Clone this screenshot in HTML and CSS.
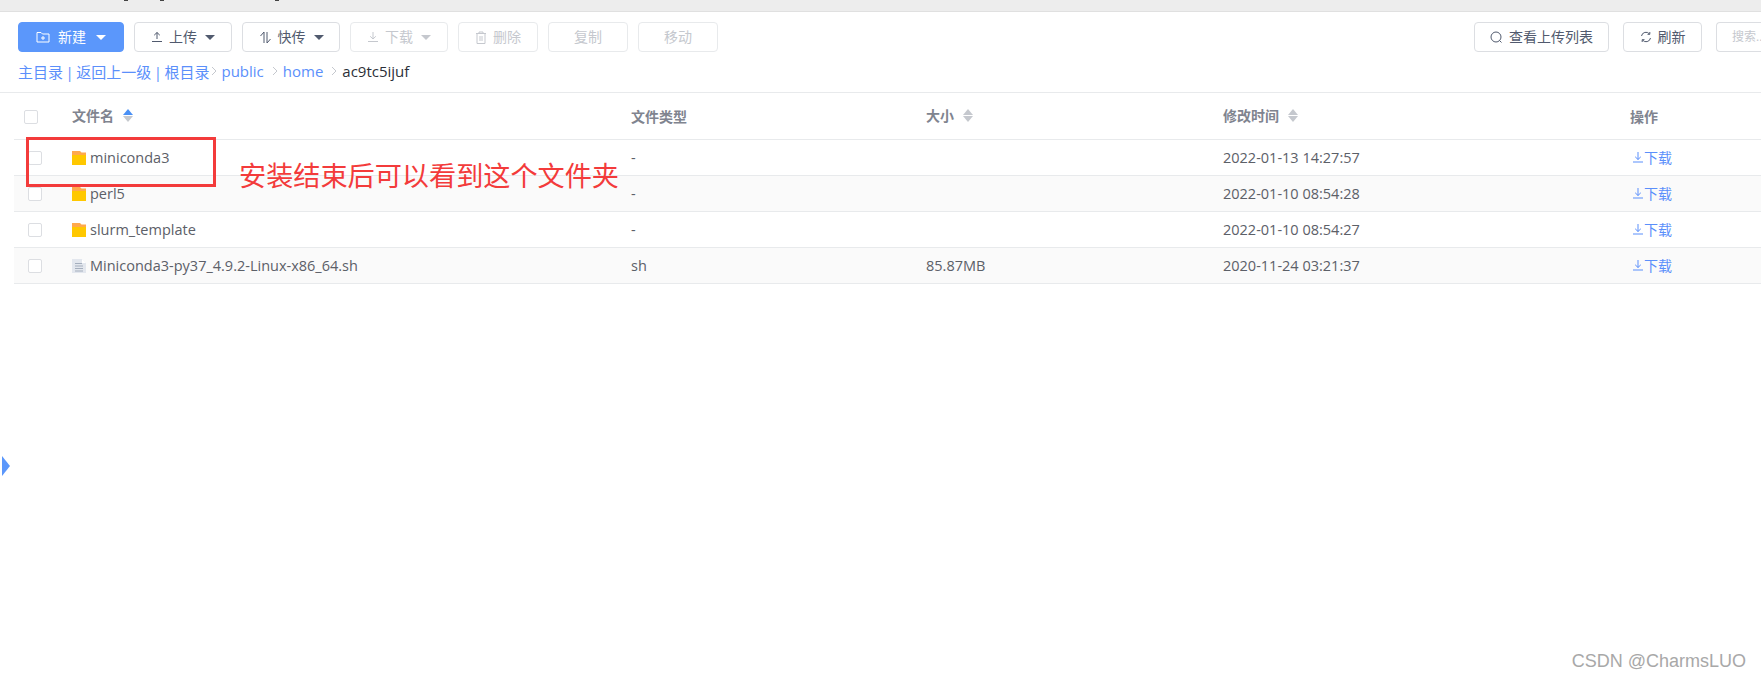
FILE: index.html
```html
<!DOCTYPE html>
<html lang="zh-CN">
<head>
<meta charset="utf-8">
<title>文件管理</title>
<link rel="stylesheet" href="styles.css">
</head>
<body>
<div class="topbar"><i class="frag f1"></i><i class="frag f2"></i><i class="frag f3"></i></div>
<div class="toolbar">
  <div class="btn-group">
    <button class="btn primary w106"><svg class="ic" width="14" height="14" viewBox="0 0 14 14" fill="none" stroke="currentColor"><path d="M1 2.500h4l1.500 1.500h6.500v8h-12z"/><path d="M7 6v4M5 8h4"/></svg><span class="gap8">新建</span><i class="caret gap10"></i></button>
    <button class="btn w98"><svg class="ic" width="12" height="12" viewBox="0 0 12 12" fill="none" stroke="currentColor"><path d="M6 8V1.500M3.200 4.200 6 1.500l2.800 2.700M1 10.500h10"/></svg><span class="gap6">上传</span><i class="caret dark gap8"></i></button>
    <button class="btn w98"><svg class="ic" width="13" height="13" viewBox="0 0 13 13" fill="none" stroke="currentColor"><path d="M5 12V1L1.500 5M8 1v11l3.500-4"/></svg><span class="gap6">快传</span><i class="caret dark gap8"></i></button>
    <button class="btn off w98"><svg class="ic" width="12" height="12" viewBox="0 0 12 12" fill="none" stroke="currentColor"><path d="M6 1v7M3.200 5.300 6 8l2.800-2.700M1 10.500h10"/></svg><span class="gap6">下载</span><i class="caret pale gap8"></i></button>
    <button class="btn off w80"><svg class="ic" width="12" height="13" viewBox="0 0 12 13" fill="none" stroke="currentColor"><path d="M1 2.500h10M4 2.500V1h4v1.500M2 2.500v10h8v-10M5 5v5M7 5v5"/></svg><span class="gap6">删除</span></button>
    <button class="btn off w80">复制</button>
    <button class="btn off w80">移动</button>
  </div>
  <div class="btn-group right">
    <button class="btn w135"><svg class="ic" width="13" height="13" viewBox="0 0 13 13" fill="none" stroke="currentColor"><circle cx="6" cy="6" r="5"/><path d="m9.500 9.500 2 2"/></svg><span class="gap6">查看上传列表</span></button>
    <button class="btn w79"><svg class="ic" width="12" height="12" viewBox="0 0 12 12" fill="none" stroke="currentColor"><path d="M1.500 5A4.500 4.500 0 0 1 9.500 3M10.500 7A4.500 4.500 0 0 1 2.500 9M9.800 1v2.300H7.500M2.200 11V8.700h2.300"/></svg><span class="gap6">刷新</span></button>
    <div class="search">搜索..</div>
  </div>
</div>
<nav class="crumbs">
  <a class="roots">主目录 | 返回上一级 | 根目录</a>
  <svg class="chev first" width="6" height="10" viewBox="0 0 6 10" fill="none" stroke="#c5c8ce"><path d="m1 1 4 4-4 4"/></svg>
  <a>public</a>
  <svg class="chev" width="6" height="10" viewBox="0 0 6 10" fill="none" stroke="#c5c8ce"><path d="m1 1 4 4-4 4"/></svg>
  <a>home</a>
  <svg class="chev" width="6" height="10" viewBox="0 0 6 10" fill="none" stroke="#c5c8ce"><path d="m1 1 4 4-4 4"/></svg>
  <span class="current">ac9tc5ijuf</span>
</nav>
<div class="table">
  <div class="row head">
    <span class="c0"><i class="check"></i></span>
    <span class="c1">文件名<i class="sort active"></i></span>
    <span class="c2">文件类型</span>
    <span class="c3">大小<i class="sort"></i></span>
    <span class="c4">修改时间<i class="sort"></i></span>
    <span class="c5">操作</span>
  </div>
  <div class="row">
    <span class="c0 inset"><i class="check"></i></span>
    <span class="c1"><svg class="file" width="14" height="14" viewBox="0 0 14 14"><path fill="#ffa94d" d="M0 0h8l1.500 1.500H14V5H0z"/><path fill="#ffc800" d="M0 4h14v10H0z"/></svg>miniconda3</span>
    <span class="c2">-</span><span class="c3"></span>
    <span class="c4">2022-01-13 14:27:57</span>
    <span class="c5 dl"><svg width="12" height="12" viewBox="0 0 12 12" fill="none" stroke="currentColor"><path d="M6 1v7.500M3.200 5.800 6 8.500l2.800-2.700M1 11h10"/></svg>下载</span>
  </div>
  <div class="row alt">
    <span class="c0 inset"><i class="check"></i></span>
    <span class="c1"><svg class="file" width="14" height="14" viewBox="0 0 14 14"><path fill="#ffa94d" d="M0 0h8l1.500 1.500H14V5H0z"/><path fill="#ffc800" d="M0 4h14v10H0z"/></svg>perl5</span>
    <span class="c2">-</span><span class="c3"></span>
    <span class="c4">2022-01-10 08:54:28</span>
    <span class="c5 dl"><svg width="12" height="12" viewBox="0 0 12 12" fill="none" stroke="currentColor"><path d="M6 1v7.500M3.200 5.800 6 8.500l2.800-2.700M1 11h10"/></svg>下载</span>
  </div>
  <div class="row">
    <span class="c0 inset"><i class="check"></i></span>
    <span class="c1"><svg class="file" width="14" height="14" viewBox="0 0 14 14"><path fill="#ffa94d" d="M0 0h8l1.500 1.500H14V5H0z"/><path fill="#ffc800" d="M0 4h14v10H0z"/></svg>slurm_template</span>
    <span class="c2">-</span><span class="c3"></span>
    <span class="c4">2022-01-10 08:54:27</span>
    <span class="c5 dl"><svg width="12" height="12" viewBox="0 0 12 12" fill="none" stroke="currentColor"><path d="M6 1v7.500M3.200 5.800 6 8.500l2.800-2.700M1 11h10"/></svg>下载</span>
  </div>
  <div class="row alt">
    <span class="c0 inset"><i class="check"></i></span>
    <span class="c1"><svg class="file" width="14" height="14" viewBox="0 0 14 14"><path fill="#e3e7ee" d="M0 0h10l4 4v10H0z"/><path fill="#fff" d="M10 0l4 4h-4z"/><path stroke="#a4aebd" d="M3 4.500h7M3 7h8M3 9.500h8M3 12h8"/></svg>Miniconda3-py37_4.9.2-Linux-x86_64.sh</span>
    <span class="c2">sh</span><span class="c3">85.87MB</span>
    <span class="c4">2020-11-24 03:21:37</span>
    <span class="c5 dl"><svg width="12" height="12" viewBox="0 0 12 12" fill="none" stroke="currentColor"><path d="M6 1v7.500M3.200 5.800 6 8.500l2.800-2.700M1 11h10"/></svg>下载</span>
  </div>
</div>
<div class="redbox"></div>
<div class="note">安装结束后可以看到这个文件夹</div>
<i class="handle"></i>
<div class="mark">CSDN @CharmsLUO</div>
</body>
</html>
```
FILE: styles.css
```css
* { box-sizing: border-box; }
html, body { margin: 0; height: 100%; }
body {
  position: relative;
  width: 1761px;
  height: 677px;
  overflow: hidden;
  background: #fff;
  color: #5c6068;
  font-family: "Open Sans", "Noto Sans CJK SC", sans-serif;
  font-size: 14px;
}
.topbar {
  display: flex;
  height: 12px;
  padding-left: 124px;
  background: #ededed;
  border-bottom: 1px solid #e0e0e0;
  overflow: hidden;
}
.frag { display: block; width: 4px; height: 1px; background: #444; }
.f2 { margin-left: 32px; }
.f3 { margin-left: 111px; }
.toolbar {
  display: flex;
  justify-content: space-between;
  padding: 10px 0 0 18px;
  height: 40px;
}
.btn-group { display: flex; gap: 10px; }
.right { gap: 14px; }
.btn {
  display: flex;
  align-items: center;
  justify-content: center;
  height: 30px;
  padding: 0;
  border: 1px solid #dcdee2;
  border-radius: 4px;
  background: #fff;
  color: #515a6e;
  font: inherit;
  font-size: 14px;
  line-height: 1;
}
.primary { background: #5b97fb; border-color: #5b97fb; color: #fff; }
.off { border-color: #e8eaec; color: #c5c8ce; }
.w106 { width: 106px; }
.w98 { width: 98px; }
.w80 { width: 80px; }
.w135 { width: 135px; }
.w79 { width: 79px; }
.gap6 { margin-left: 6px; }
.gap8 { margin-left: 8px; }
.gap10 { margin-left: 10px; }
.caret {
  width: 0;
  height: 0;
  border: 5px solid transparent;
  border-top: 5px solid #fff;
  border-bottom: 0;
}
.caret.dark { border-top-color: #515a6e; }
.caret.pale { border-top-color: #c5c8ce; }
.search {
  width: 45px;
  height: 30px;
  padding-left: 15px;
  border: 1px solid #dcdee2;
  border-right: 0;
  border-radius: 4px 0 0 4px;
  color: #c5c8ce;
  font-size: 12px;
  line-height: 28px;
  white-space: nowrap;
  overflow: hidden;
}
.crumbs {
  display: flex;
  align-items: center;
  height: 41px;
  padding: 0 0 2px 18px;
  border-bottom: 1px solid #e8eaec;
  font-size: 15px;
  color: #5b8ffb;
}
.roots { word-spacing: -1.4px; }
.chev { margin: 0 5px 0 8px; flex: none; }
.chev.first { margin: 0 4px 0 2px; }
.current { color: #2b2f38; }
.table { padding-left: 14px; }
.row {
  display: grid;
  grid-template-columns: 58px 559px 295px 297px 407px 1fr;
  align-items: center;
  height: 36px;
  border-bottom: 1px solid #e8eaec;
  font-size: 14.5px;
  white-space: nowrap;
}
.row.alt { background: #fafafa; }
.head {
  height: 47px;
  font-size: 14px;
  font-weight: 700;
  color: #80848f;
}
.head .c0 { margin-top: 2px; }
.head .c1, .head .c3, .head .c4 { padding-bottom: 2px; }
.c0 { display: flex; padding-left: 10px; }
.inset { padding-left: 14px; }
.check {
  display: block;
  width: 14px;
  height: 14px;
  border: 1px solid #dcdee2;
  border-radius: 2px;
  background: #fff;
}
.c1, .c3, .c4 { display: flex; align-items: center; }
.file { margin-right: 4px; flex: none; }
.sort {
  display: block;
  position: relative;
  width: 10px;
  height: 13px;
  margin-left: 9px;
}
.sort::before, .sort::after {
  content: "";
  position: absolute;
  left: 0;
  border: 5px solid transparent;
}
.sort::before { top: 0; border-top: 0; border-bottom: 6px solid #c5c8ce; }
.sort::after { bottom: 0; border-bottom: 0; border-top: 6px solid #c5c8ce; }
.sort.active::before { border-bottom-color: #4a90f5; }
.dl {
  display: flex;
  align-items: center;
  padding: 0 0 2px 2px;
  color: #5b8ffb;
  font-size: 14px;
}
.redbox {
  position: absolute;
  left: 26px;
  top: 137px;
  width: 190px;
  height: 50px;
  border: 3px solid #f33b3b;
}
.note {
  position: absolute;
  left: 239px;
  top: 156px;
  color: #f33b3b;
  font-size: 27.15px;
  line-height: 40px;
  white-space: nowrap;
}
.handle {
  position: absolute;
  left: 2px;
  top: 456px;
  border-left: 8px solid #5b97fb;
  border-top: 10px solid transparent;
  border-bottom: 10px solid transparent;
}
.mark {
  position: absolute;
  right: 15px;
  top: 649px;
  color: #a8a8a8;
  font-family: "Liberation Sans", sans-serif;
  font-size: 18px;
  line-height: 24px;
}
```
